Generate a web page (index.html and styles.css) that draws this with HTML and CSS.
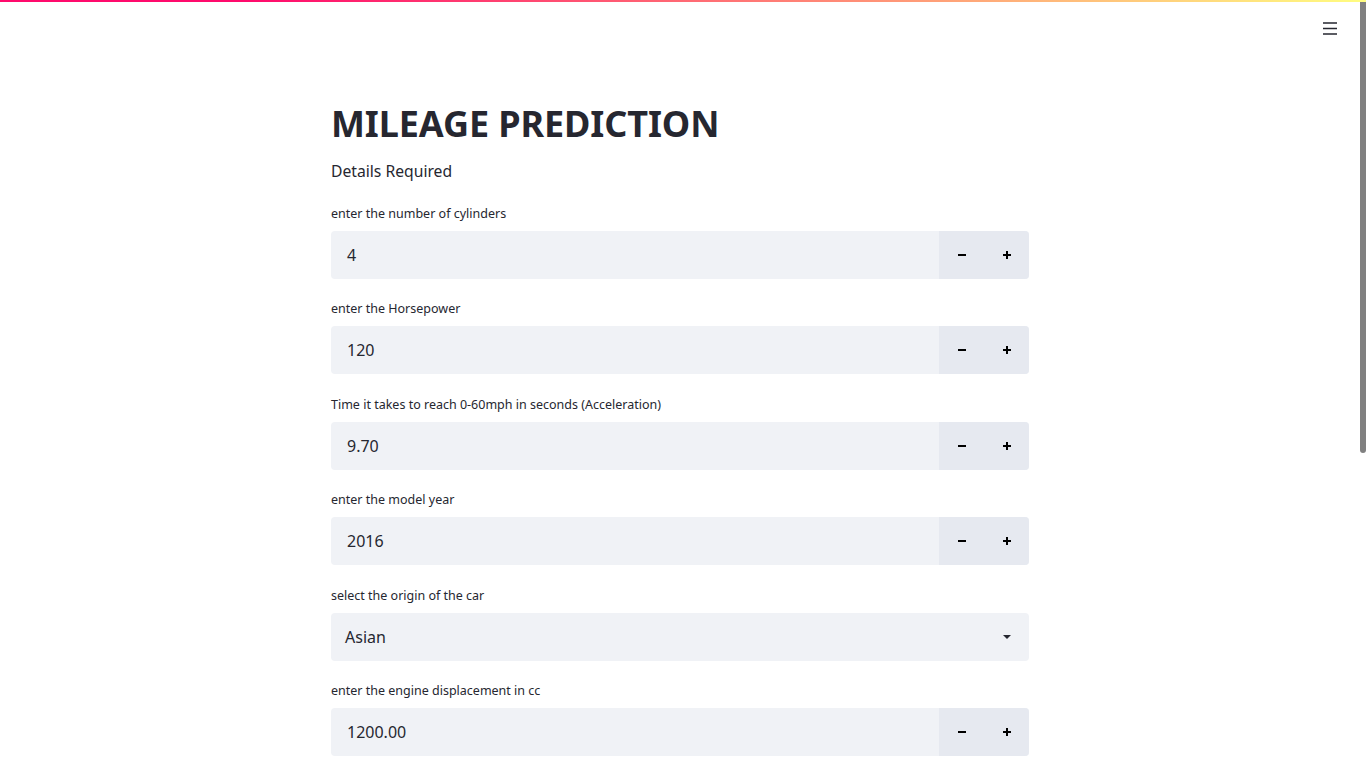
FILE: index.html
```html
<!DOCTYPE html>
<html lang="en">
<head>
<meta charset="utf-8">
<title>Mileage Prediction</title>
<link rel="stylesheet" href="styles.css">
</head>
<body>
<div class="decoration"></div>
<header class="toolbar">
  <button class="menu-btn" aria-label="Menu">
    <svg width="16" height="14" viewBox="0 0 16 14"><path d="M1 2h14M1 7.5h14M1 13h14" stroke="#262730" stroke-width="1.6" fill="none"/></svg>
  </button>
</header>
<div class="app">
  <main class="block">
    <h1 class="title">MILEAGE PREDICTION</h1>
    <p class="subtitle">Details Required</p>

    <div class="widget">
      <label class="label">enter the number of cylinders</label>
      <div class="number">
        <div class="value">4</div>
        <div class="steps">
          <span class="step"><svg width="10" height="10" viewBox="0 0 10 10"><path d="M1 5h8" stroke="#000" stroke-width="2"/></svg></span>
          <span class="step"><svg width="10" height="10" viewBox="0 0 10 10"><path d="M1 5h8M5 1v8" stroke="#000" stroke-width="2"/></svg></span>
        </div>
      </div>
    </div>

    <div class="widget">
      <label class="label">enter the Horsepower</label>
      <div class="number">
        <div class="value">120</div>
        <div class="steps">
          <span class="step"><svg width="10" height="10" viewBox="0 0 10 10"><path d="M1 5h8" stroke="#000" stroke-width="2"/></svg></span>
          <span class="step"><svg width="10" height="10" viewBox="0 0 10 10"><path d="M1 5h8M5 1v8" stroke="#000" stroke-width="2"/></svg></span>
        </div>
      </div>
    </div>

    <div class="widget">
      <label class="label">Time it takes to reach 0-60mph in seconds (Acceleration)</label>
      <div class="number">
        <div class="value">9.70</div>
        <div class="steps">
          <span class="step"><svg width="10" height="10" viewBox="0 0 10 10"><path d="M1 5h8" stroke="#000" stroke-width="2"/></svg></span>
          <span class="step"><svg width="10" height="10" viewBox="0 0 10 10"><path d="M1 5h8M5 1v8" stroke="#000" stroke-width="2"/></svg></span>
        </div>
      </div>
    </div>

    <div class="widget">
      <label class="label">enter the model year</label>
      <div class="number">
        <div class="value">2016</div>
        <div class="steps">
          <span class="step"><svg width="10" height="10" viewBox="0 0 10 10"><path d="M1 5h8" stroke="#000" stroke-width="2"/></svg></span>
          <span class="step"><svg width="10" height="10" viewBox="0 0 10 10"><path d="M1 5h8M5 1v8" stroke="#000" stroke-width="2"/></svg></span>
        </div>
      </div>
    </div>

    <div class="widget">
      <label class="label">select the origin of the car</label>
      <div class="select">
        <div class="select-value">Asian</div>
        <svg class="caret" width="10" height="6" viewBox="0 0 10 6"><path d="M1 1h8L5 5z" fill="#262730"/></svg>
      </div>
    </div>

    <div class="widget">
      <label class="label">enter the engine displacement in cc</label>
      <div class="number">
        <div class="value">1200.00</div>
        <div class="steps">
          <span class="step"><svg width="10" height="10" viewBox="0 0 10 10"><path d="M1 5h8" stroke="#000" stroke-width="2"/></svg></span>
          <span class="step"><svg width="10" height="10" viewBox="0 0 10 10"><path d="M1 5h8M5 1v8" stroke="#000" stroke-width="2"/></svg></span>
        </div>
      </div>
    </div>
  </main>
</div>
<div class="scroll-thumb"></div>
</body>
</html>
```
FILE: styles.css
```css
* { box-sizing: border-box; }
html, body {
  margin: 0;
  height: 100%;
  overflow: hidden;
  background: #fff;
}
body {
  font-family: "Noto Sans", "Open Sans", sans-serif;
  color: #262730;
}
.decoration {
  position: fixed;
  top: 0; left: 0; right: 0;
  height: 2px;
  background: linear-gradient(90deg, #ff0a6c 18%, #fffd80 100%);
  z-index: 10;
}
.toolbar {
  position: fixed;
  top: 0; right: 0;
  padding: 21px 28px 0 0;
}
.menu-btn {
  border: 0;
  background: transparent;
  padding: 0;
  display: block;
  width: 16px;
  height: 14px;
}
.menu-btn svg { display: block; }
.app {
  width: 1360px;
  display: flex;
  justify-content: center;
}
.block {
  width: 730px;
  padding: 102px 16px 0;
}
.title {
  margin: 0;
  font-size: 36px;
  line-height: 44px;
  font-weight: 700;
  color: #262730;
  letter-spacing: -0.1px;
}
.subtitle {
  margin: 13px 0 0;
  font-size: 15.7px;
  line-height: 24px;
}
.widget {
  margin-top: 20.4px;
}
.subtitle + .widget { margin-top: 21px; }
.label {
  display: block;
  font-size: 12.5px;
  line-height: 20px;
  margin-bottom: 7px;
  color: #262730;
}
.number, .select {
  display: flex;
  height: 48px;
  border-radius: 4px;
  background: #f0f2f6;
  overflow: hidden;
}
.value {
  flex: 1;
  display: flex;
  align-items: center;
  padding-left: 16px;
  font-size: 16px;
}
.steps {
  display: flex;
  background: #e6e9f0;
}
.step {
  width: 45px;
  display: flex;
  align-items: center;
  justify-content: center;
}
.step svg { display: block; }
.select {
  align-items: center;
  justify-content: space-between;
  padding: 0 17px 0 14px;
}
.select-value { font-size: 16px; }
.caret { display: block; }
.scroll-thumb {
  position: fixed;
  top: 0;
  right: 0;
  width: 6px;
  height: 453px;
  background: #808080;
  border-radius: 0 0 3px 3px;
}
```
